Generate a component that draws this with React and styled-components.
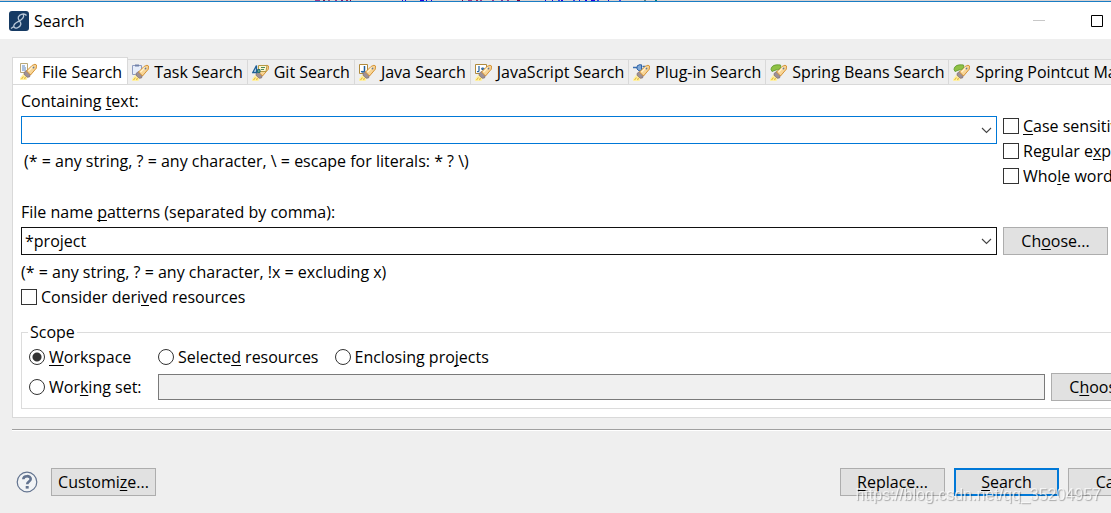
import React, { useState } from 'react';
import styled, { createGlobalStyle } from 'styled-components';

const GlobalStyle = createGlobalStyle`
  * {
    box-sizing: border-box;
  }

  body {
    margin: 0;
    overflow: hidden;
    background: #efefef;
    color: #000;
    font: 16px/24px 'Open Sans', 'Noto Sans', sans-serif;
  }

  button, input {
    font: inherit;
    color: inherit;
  }

  u {
    text-underline-offset: 2px;
    text-decoration-thickness: 1px;
    text-decoration-skip-ink: none;
  }
`;

// code of the editor that shows above the window
const specks = [
    [315, 5, '#9a3a8a'], [323, 2, '#7a2050'], [328, 2, '#a05080'], [335, 2, '#9a3a8a'],
    [341, 2, '#7a2080'], [346, 2, '#a03060'], [350, 1, '#7a0040'], [402, 1, '#2000e0'],
    [405, 1, '#2000e0'], [420, 4, '#2000e0'], [426, 1, '#2000e0'], [431, 1, '#2000e0'],
    [462, 1, '#7a0040'], [468, 4, '#9a3a8a'], [476, 2, '#a03060'], [480, 2, '#9a3a8a'],
    [492, 2, '#9a3a8a'], [501, 2, '#7a3a9a'], [507, 2, '#9a3a8a'], [517, 3, '#7a0040'],
    [545, 1, '#2000e0'], [552, 1, '#2000e0'], [558, 2, '#4040e0'], [561, 2, '#2000e0'],
    [573, 2, '#4040e0'], [579, 1, '#2000e0'], [585, 2, '#2000e0'], [591, 4, '#2000e0'],
    [597, 2, '#4040e0'], [608, 1, '#2000e0'], [619, 2, '#4040e0'], [644, 2, '#608080'],
    [655, 2, '#008080'],
];

const badges = {
    file: (
        <g>
            <path d='M.5.5h7v9h-7z' fill='#fbfcff' stroke='#b9a878' />
            <path d='M2 3h3M2 5h4M2 7h4' stroke='#5b86bd' />
        </g>
    ),
    task: (
        <g>
            <path d='M.5 1.5h9v9h-9z' fill='#e6edfa' stroke='#8e9cc0' />
            <path d='M3 1.500h4' stroke='#7080a8' strokeWidth='2' />
        </g>
    ),
    git: (
        <g>
            <path d='M6.500 1.500h8.500l-1 6H6.500z' fill='#fdf6d2' stroke='#b59a45' />
            <path d='M9 3.500h4M9 5.500h3' stroke='#4c8a5c' />
            <path d='M.8 8.500 4.500 1.500v7z' fill='#cfe0f2' stroke='#1f5f95' strokeWidth='1.300' />
            <path d='M5.500 5.500h2.500v3H5.500z' fill='#5fa48c' stroke='#2a6f70' />
        </g>
    ),
    java: (
        <g>
            <path d='M.5.5h8v9h-8z' fill='#fff' stroke='#b08a3c' />
            <path d='M5.500 2v4.500q0 1.500-1.500 1.500-1.200 0-1.500-1' fill='none' stroke='#1d5d9b' strokeWidth='1.500' />
        </g>
    ),
    js: (
        <g>
            <path d='M.5.5h11v9H.5z' fill='#fff' stroke='#b08a3c' />
            <path d='M4 2v4.500Q4 8 2 7.500M9.500 4.500Q6.500 3.500 6.800 5q.3.7 1.600.9 1.400.4.8 1.600Q8.500 8.500 6.500 7.800' fill='none' stroke='#1d5d9b' strokeWidth='1.200' />
        </g>
    ),
    plugin: (
        <g>
            <path d='M0 3.500h4M5 1v5M9.500 2.500h3M9.500 5h3' stroke='#3c6fae' strokeWidth='1.300' />
            <path d='M4 2.500 6 .8h2.500v6H6L4 5z' fill='#7fa9d8' stroke='#2f62a5' />
        </g>
    ),
    spring: (
        <path d='M1 5.500C1.500 1.500 5 .3 10.500 1c1 2.800-1 4.800-4.500 5L2 7.500z' fill='#8fc144' stroke='#5c952a' strokeWidth='.8' />
    ),
};

const TorchIcon = ({ badge, onTop }) => (
    <svg width='17' height='17' viewBox='0 0 17 17' aria-hidden='true'>
        {!onTop && badges[badge]}
        <path d='M3.500 10.500 0 15v2h6.500L8 14z' fill='#fff1a6' />
        <path d='m1.500 16 2-2.500M4.500 16l1-2' stroke='#e8bc3a' strokeWidth='1.200' />
        <path d='M4 9.500 6.500 7.500l4 3.500-1 3-2.300.2-3-2.700z' fill='#9d9196' stroke='#7b6c70' strokeWidth='.7' />
        <path d='m6.500 8 5.500-5.500 3-1.300 1.500.8-.2 3.200L10.500 12z' fill='#f8d596' stroke='#d08a28' strokeWidth='.9' />
        <path d='m8.500 8 5-5' stroke='#fff2cf' strokeWidth='1.500' />
        <circle cx='13.500' cy='4.500' r='.9' fill='#6b7890' />
        {onTop && badges[badge]}
    </svg>
);

const tabs = [
    ['file', 'File Search'],
    ['task', 'Task Search'],
    ['git', 'Git Search'],
    ['java', 'Java Search'],
    ['js', 'JavaScript Search'],
    ['plugin', 'Plug-in Search'],
    ['spring', 'Spring Beans Search'],
    ['spring', 'Spring Pointcut Matches'],
];

const Combo = ({ id, value, focused }) => {
    const [text, setText] = useState(value);
    return (
        <ComboBox $focused={focused}>
            <input id={id} value={text} onChange={(e) => setText(e.target.value)} />
            <button type='button' aria-label='Show history'>
                <svg width='11' height='7' viewBox='0 0 11 7'>
                    <path d='m1 1 4.500 4.500L10 1' fill='none' stroke='#444' strokeWidth='1.100' />
                </svg>
            </button>
        </ComboBox>
    )
}

const App = () => {
    const [scope, setScope] = useState('workspace');
    const radio = (name) => ({
        type: 'radio',
        name: 'scope',
        checked: scope === name,
        onChange: () => setScope(name),
    });

    return (
        <Screen>
            <GlobalStyle />
            <Backdrop aria-hidden='true'>
                {specks.map(([x, w, color]) => (
                    <rect key={x} x={x} y='0' width={w} height='1' fill={color} />
                ))}
            </Backdrop>
            <Dialog>
                <TitleBar>
                    <svg width='20' height='20' viewBox='0 0 20 20' aria-hidden='true'>
                        <rect width='20' height='20' rx='3' fill='#163a63' />
                        <path d='M17.500 4.500C15.500 1.800 10.500 3 9.300 6c-1 3 3.200 4.500 2.500 7.500-.8 3.500-6.300 4.800-7 2C4 12 9.500 11 12.500 8.500c2-1.700 3-4 1.300-5.300M4.800 15.500 2 17.500' fill='none' stroke='#b9c8d8' strokeWidth='1.300' />
                    </svg>
                    <Title>Search</Title>
                    <WindowButton type='button' aria-label='Minimize'>
                        <svg width='12' height='12'><path d='M0 5.500h12' stroke='#c8c8c8' /></svg>
                    </WindowButton>
                    <WindowButton type='button' aria-label='Maximize'>
                        <svg width='12' height='12'><path d='M.5.5h11v11H.5z' fill='none' stroke='#000' /></svg>
                    </WindowButton>
                    <WindowButton type='button' aria-label='Close'>
                        <svg width='12' height='12'><path d='m0 0 12 12M12 0 0 12' stroke='#000' /></svg>
                    </WindowButton>
                </TitleBar>

                <Content>
                    <TabList role='tablist'>
                        {tabs.map(([badge, name], i) => (
                            <Tab key={name} type='button' role='tab' aria-selected={i === 0} $active={i === 0}>
                                <TorchIcon badge={badge} onTop={badge === 'git' || badge === 'spring'} />
                                {name}
                            </Tab>
                        ))}
                    </TabList>

                    <Panel role='tabpanel'>
                        <FieldGrid>
                            <FieldLabel htmlFor='text'>Containing <u>t</u>ext:</FieldLabel>
                            <Combo id='text' value='' focused />
                            <Options>
                                <Check><input type='checkbox' /><span><u>C</u>ase sensitive</span></Check>
                                <Check><input type='checkbox' /><span>Regular e<u>x</u>pression</span></Check>
                                <Check><input type='checkbox' /><span>Who<u>l</u>e word</span></Check>
                            </Options>
                            <Hint $indent>(* = any string, ? = any character, \ = escape for literals: * ? \)</Hint>
                        </FieldGrid>

                        <FieldGrid>
                            <FieldLabel htmlFor='patterns'>File name <u>p</u>atterns (separated by comma):</FieldLabel>
                            <Combo id='patterns' value='*project' />
                            <Button type='button'>Ch<u>o</u>ose...</Button>
                            <Hint>(* = any string, ? = any character, !x = excluding x)</Hint>
                        </FieldGrid>
                        <Check $tall><input type='checkbox' /><span>Consider deri<u>v</u>ed resources</span></Check>

                        <Scope>
                            <legend>Scope</legend>
                            <ScopeGrid>
                                <Check $tall><input {...radio('workspace')} /><span><u>W</u>orkspace</span></Check>
                                <RadioRow>
                                    <Check $tall><input {...radio('selected')} /><span>Selecte<u>d</u> resources</span></Check>
                                    <Check $tall><input {...radio('enclosing')} /><span>Enclosing pro<u>j</u>ects</span></Check>
                                </RadioRow>
                                <Check $tall><input {...radio('set')} /><span>Wor<u>k</u>ing set:</span></Check>
                                <WorkingSet>
                                    <input aria-label='Working set' readOnly />
                                    <Button type='button'>C<u>h</u>oose...</Button>
                                </WorkingSet>
                            </ScopeGrid>
                        </Scope>
                    </Panel>
                </Content>

                <Footer>
                    <HelpButton type='button' aria-label='Help'>
                        <svg width='22' height='22' viewBox='0 0 22 22'>
                            <circle cx='11' cy='11' r='9.800' fill='#f1f3f5' stroke='#62738f' strokeWidth='1.200' />
                            <path d='M7.300 8.200c.2-4 7.400-4 7.400-.2 0 2.600-3.500 2.500-3.500 5.300' fill='none' stroke='#62738f' strokeWidth='2.600' />
                            <path d='M9.700 15h3v2.600h-3z' fill='#62738f' />
                        </svg>
                    </HelpButton>
                    <Button type='button'>Customi<u>z</u>e...</Button>
                    <Spacer />
                    <Button type='button'><u>R</u>eplace...</Button>
                    <Button type='button' $primary><u>S</u>earch</Button>
                    <Button type='button'>Cancel</Button>
                </Footer>
            </Dialog>
            <Watermark>https://blog.csdn.net/qq_35204957</Watermark>
        </Screen>
    )
}
export default App;

const Screen = styled.div`
  min-height: 100vh;
  overflow: hidden;
`

const Backdrop = styled.svg`
  display: block;
  width: 100%;
  height: 1px;
  background: #d8d2d2;
`

// the window reaches past the right edge of the screen
const Dialog = styled.div`
  width: calc(100% + 73px);
  border-top: 1px solid #1a7dc4;
`

const TitleBar = styled.header`
  display: flex;
  align-items: center;
  height: 37px;
  padding-left: 9px;
  background: #fff;
`

const Title = styled.span`
  flex: 1;
  margin-left: 5px;
`

const WindowButton = styled.button`
  display: grid;
  place-items: center;
  width: 58px;
  height: 100%;
  padding: 0;
  border: 0;
  background: none;
`

const Content = styled.main`
  padding: 18px 11px 11px 12px;
`

const TabList = styled.div`
  display: flex;
  align-items: flex-end;
  overflow: hidden;
`

const Tab = styled.button`
  display: flex;
  flex: none;
  align-items: center;
  gap: 5px;
  height: ${(p) => (p.$active ? 28 : 25)}px;
  margin-bottom: ${(p) => (p.$active ? -1 : 0)}px;
  padding: 0 ${(p) => (p.$active ? '5px 0 7px' : '4px')};
  border: 1px solid #d9d9d9;
  border-width: ${(p) => (p.$active ? '1px 1px 0' : '1px 1px 0 0')};
  background: ${(p) => (p.$active ? '#fff' : '#efefef')};
  white-space: nowrap;
`

const Panel = styled.section`
  padding: 4px 8px 8px;
  border: 1px solid #d9d9d9;
  background: #fff;
`

const FieldGrid = styled.div`
  display: grid;
  grid-template-rows: 27px 28px 30px;
  grid-template-columns: minmax(0, 1fr) 161px;
  column-gap: 6px;

  & + & {
    margin-top: 26px;
  }
`

const FieldLabel = styled.label`
  grid-column: 1 / -1;
`

const ComboBox = styled.div`
  display: flex;
  height: 28px;
  border: 1px solid ${(p) => (p.$focused ? '#0078d7' : '#111')};
  background: #fff;

  input {
    flex: 1;
    min-width: 0;
    padding: 0 3px;
    border: 0;
    outline: 0;
    background: none;
  }

  button {
    display: grid;
    place-items: center;
    width: 20px;
    padding: 0;
    border: 0;
    background: none;
  }
`

const Options = styled.div`
  display: flex;
  flex-direction: column;
  grid-row: 2 / 4;
  grid-column: 2;
  gap: 5px;
  height: 58px;
`

const Hint = styled.p`
  margin: 5px 0 0;
  padding-left: ${(p) => (p.$indent ? 3 : 0)}px;
`

const Check = styled.label`
  display: flex;
  flex: none;
  align-items: center;
  gap: 4px;
  height: ${(p) => (p.$tall ? 24 : 20)}px;
  white-space: nowrap;

  input {
    appearance: none;
    flex: none;
    width: 16px;
    height: 16px;
    margin: 0;
    border: 1px solid #333;
    background: #fff;
  }

  input[type='radio'] {
    border-radius: 50%;
  }

  input[type='radio']:checked {
    background: radial-gradient(circle, #333 4px, #fff 5px);
  }
`

const Button = styled.button`
  width: 105px;
  height: 28px;
  padding: 0;
  border: ${(p) => (p.$primary ? '2px solid #0078d7' : '1px solid #adadad')};
  background: #e1e1e1;
  white-space: nowrap;
`

const Scope = styled.fieldset`
  min-width: 0;
  margin: 11px 0 0;
  padding: 1px 7px 7px;
  border: 1px solid #dcdcdc;

  legend {
    margin-left: -1px;
    padding: 0 2px;
  }
`

const ScopeGrid = styled.div`
  display: grid;
  grid-template-columns: 123px minmax(0, 1fr);
  row-gap: 4px;
  column-gap: 6px;
  align-items: center;
`

const RadioRow = styled.div`
  display: flex;
  gap: 16px;
`

const WorkingSet = styled.div`
  display: flex;
  align-items: center;
  gap: 6px;

  input {
    flex: 1;
    min-width: 0;
    height: 26px;
    border: 1px solid #7a7a7a;
    background: #f0f0f0;
  }
`

const Footer = styled.footer`
  display: flex;
  align-items: center;
  gap: 9px;
  margin-left: 12px;
  padding: 38px 11px 17px 4px;
  border-top: 1px solid #a0a0a0;
  box-shadow: inset 0 1px #fff;
`

const HelpButton = styled.button`
  display: grid;
  place-items: center;
  margin-right: 4px;
  padding: 0;
  border: 0;
  background: none;
`

const Spacer = styled.div`
  flex: 1;
`

const Watermark = styled.div`
  position: fixed;
  right: 10px;
  bottom: 6px;
  color: rgba(255, 255, 255, 0.7);
  font: 16px/24px 'Liberation Sans', sans-serif;
  text-shadow: 1px 1px 1px rgba(0, 0, 0, 0.3);
  pointer-events: none;
`
